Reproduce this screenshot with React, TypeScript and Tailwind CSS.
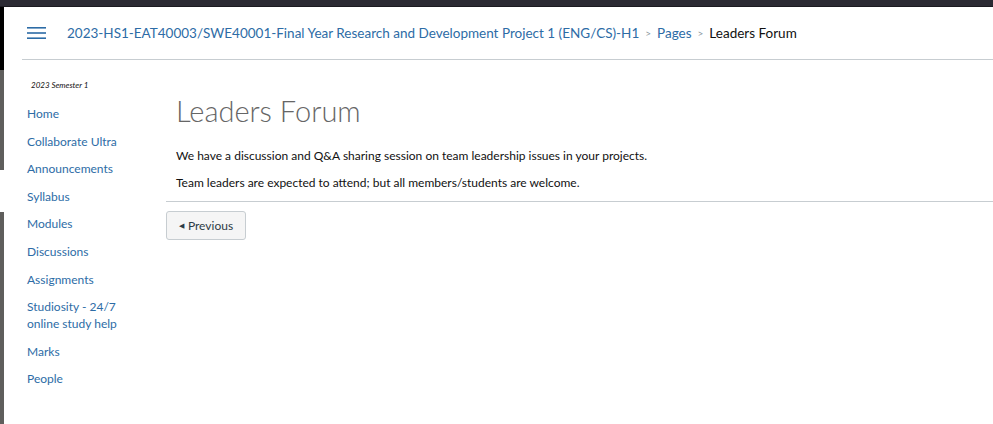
const navItems = [
  "Home",
  "Collaborate Ultra",
  "Announcements",
  "Syllabus",
  "Modules",
  "Discussions",
  "Assignments",
  "Studiosity - 24/7 online study help",
  "Marks",
  "People",
];

function Hamburger() {
  return (
    <svg width="19" height="14" viewBox="0 0 19 14" className="block">
      <rect x="0" y="1" width="19" height="1.6" fill="#2d6ca6" />
      <rect x="0" y="6.2" width="19" height="1.6" fill="#2d6ca6" />
      <rect x="0" y="11.4" width="19" height="1.6" fill="#2d6ca6" />
    </svg>
  );
}

function Chevron() {
  return <span className="mx-[6px] text-[10px] text-[#8b969e]">&gt;</span>;
}

export default function App() {
  return (
    <div className="flex h-[424px] w-[993px] flex-col overflow-hidden bg-white font-['Lato','Noto_Sans',sans-serif]">
      <div className="h-[7px] shrink-0 border-b border-[#1b1a20] bg-[#2b2a33]" />
      <div className="flex flex-1">
        {/* window edge */}
        <div className="flex w-[4px] shrink-0 flex-col">
          <div className="h-[63px] bg-black" />
          <div className="h-[100px] bg-[#5f5e5c]" />
          <div className="h-[42px] bg-white" />
          <div className="flex-1 bg-[#5f5e5c]" />
        </div>

        <div className="flex flex-1 flex-col">
          <header className="ml-[18px] flex h-[53px] shrink-0 items-center border-b border-[#c7cdd1] pl-[5px]">
            <Hamburger />
            <nav className="ml-[21px] flex items-center text-[13.5px] text-[#2d6ca6]">
              <span>2023-HS1-EAT40003/SWE40001-Final Year Research and Development Project 1 (ENG/CS)-H1</span>
              <Chevron />
              <span>Pages</span>
              <Chevron />
              <span className="text-[#111]">Leaders Forum</span>
            </nav>
          </header>

          <div className="flex flex-1">
            <aside className="w-[162px] shrink-0 pl-[23px] pt-[20px]">
              <p className="pl-[4px] text-[8px] italic leading-[10px] text-[#111]">2023 Semester 1</p>
              <ul className="mt-[15px] flex w-[118px] flex-col gap-[10.6px] text-[12px] leading-[17px] text-[#2d6ca6]">
                {navItems.map((item) => (
                  <li key={item}>{item}</li>
                ))}
              </ul>
            </aside>

            <main className="flex-1 pt-[34px]">
              <h1 className="pl-[10px] text-[29px] font-light leading-[34px] text-[#666]">Leaders Forum</h1>
              <div className="mt-[19px] flex flex-col gap-[10px] pl-[10px] text-[12px] leading-[17px] text-[#111]">
                <p>We have a discussion and Q&amp;A sharing session on team leadership issues in your projects.</p>
                <p>Team leaders are expected to attend; but all members/students are welcome.</p>
              </div>
              <div className="mt-[10px] border-t border-[#c7cdd1] pt-[9px]">
                <button className="flex h-[29px] w-[80px] items-center justify-center rounded-[3px] border border-[#c7cdd1] bg-[#f5f5f5] text-[12px] text-[#2d3b45]">
                  <span className="mr-[4px] text-[7px]">◀</span>
                  Previous
                </button>
              </div>
            </main>
          </div>
        </div>
      </div>
    </div>
  );
}
